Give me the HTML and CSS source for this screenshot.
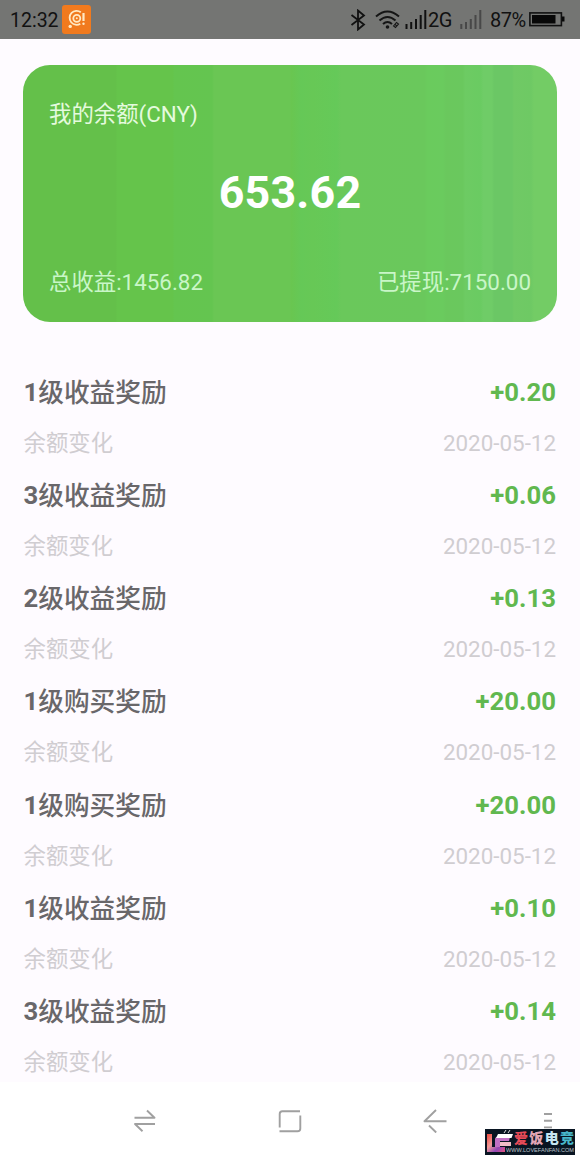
FILE: index.html
```html
<!DOCTYPE html>
<html lang="zh-CN">
<head>
<meta charset="utf-8">
<title>我的余额</title>
<link rel="stylesheet" href="styles.css">
</head>
<body>
<div class="screen">
  <header class="status">
    <span class="clock">12:32</span>
    <svg class="app" width="29" height="29" viewBox="0 0 29 29">
      <rect width="29" height="29" rx="3" fill="#f17a1e"/>
      <g fill="none" stroke="#ffe9c4" stroke-width="1.8">
        <path d="M18.8 7.2A7 7 0 1 0 18.3 18.8"/>
        <circle cx="14.8" cy="13.3" r="3.5"/>
        <path d="M21.5 8v8" stroke-width="2.2"/>
      </g>
      <circle cx="14.8" cy="13.3" r="1" fill="#ffe9c4"/>
      <circle cx="21.5" cy="18.7" r="1.2" fill="#ffe9c4"/>
      <circle cx="8.2" cy="21.4" r="1.7" fill="#ffe9c4"/>
    </svg>
    <svg class="bt" width="16" height="22" viewBox="0 0 16 22" fill="none" stroke="#111" stroke-width="1.8"><path d="M1.500 6L14 15.500 8 20.500V1.500L14 6.500 1.500 16"/></svg>
    <svg class="wifi" width="26" height="20" viewBox="0 0 26 20" fill="none" stroke="#151515" stroke-width="2">
      <path d="M1 6.500Q12.500-3.500 24 6.500M4.500 10.500Q12.500 3.500 20.500 10.500M8 14Q12.500 10 17 14"/>
      <circle cx="12.500" cy="17" r="1.800" fill="#151515" stroke="none"/>
      <path d="M18.500 16l3-3.500 2 1.500-3 3.500zM20 14.500l2 1.500" stroke-width="1.100"/>
    </svg>
    <svg class="sig" width="22" height="20" viewBox="0 0 22 20" stroke="#111" stroke-width="2"><path d="M1.500 14v5M6.200 12v7M11 9v10M15.700 5v14M20.300 0v19"/></svg>
    <span class="net">2G</span>
    <svg class="sig2" width="22" height="20" viewBox="0 0 22 20" stroke="#484848" stroke-width="2"><path d="M1.300 14v5M6 12v7M10.800 9v10M15.500 5v14M20.300 0v19"/></svg>
    <span class="pct">87%</span>
    <svg class="batt" width="36" height="15" viewBox="0 0 36 15"><rect x=".9" y=".9" width="31.500" height="12.700" fill="none" stroke="#111" stroke-width="1.600"/><path d="M3 3h23.500v8.500H3zM33 4.500h2.500v5H33z" fill="#080808"/></svg>
  </header>

  <main class="page">
    <section class="card">
      <div class="label">我的余额(CNY)</div>
      <div class="balance">653.62</div>
      <div class="totals"><span>总收益:1456.82</span><span>已提现:7150.00</span></div>
    </section>
    <ul class="list">
      <li class="item"><div class="row title"><span><b>1</b>级收益奖励</span><b class="amt">+0.20</b></div><div class="row sub"><span>余额变化</span><span>2020-05-12</span></div></li>
      <li class="item"><div class="row title"><span><b>3</b>级收益奖励</span><b class="amt">+0.06</b></div><div class="row sub"><span>余额变化</span><span>2020-05-12</span></div></li>
      <li class="item"><div class="row title"><span><b>2</b>级收益奖励</span><b class="amt">+0.13</b></div><div class="row sub"><span>余额变化</span><span>2020-05-12</span></div></li>
      <li class="item"><div class="row title"><span><b>1</b>级购买奖励</span><b class="amt">+20.00</b></div><div class="row sub"><span>余额变化</span><span>2020-05-12</span></div></li>
      <li class="item"><div class="row title"><span><b>1</b>级购买奖励</span><b class="amt">+20.00</b></div><div class="row sub"><span>余额变化</span><span>2020-05-12</span></div></li>
      <li class="item"><div class="row title"><span><b>1</b>级收益奖励</span><b class="amt">+0.10</b></div><div class="row sub"><span>余额变化</span><span>2020-05-12</span></div></li>
      <li class="item"><div class="row title"><span><b>3</b>级收益奖励</span><b class="amt">+0.14</b></div><div class="row sub"><span>余额变化</span><span>2020-05-12</span></div></li>
    </ul>
  </main>

  <nav class="nav">
    <svg width="24" height="24" viewBox="0 0 24 24"><path d="M1.500 8.800H21.500L14 1.500M22 15H2l7.500 7.300"/></svg>
    <svg width="24" height="24" viewBox="0 0 24 24"><path d="M1.700 18.500V5Q1.700 2.300 4.400 2.300H22M22.300 6.500V19.500Q22.300 22.300 19.500 22.300H1.500"/></svg>
    <svg width="24" height="24" viewBox="0 0 24 24"><path d="M13 1L1.500 12.300H23.500M6 16.500l7.200 7"/></svg>
    <svg class="more" width="8" height="18" viewBox="0 0 8 18"><path d="M0 2h8M0 8.700h8M0 15.400h8"/></svg>
  </nav>

  <div class="mark">
    <svg class="logo" width="27" height="24" viewBox="0 0 27 24">
      <defs><linearGradient id="lf" x1="0" y1="0" x2="1" y2="1"><stop offset="0" stop-color="#ee4a3e"/><stop offset=".4" stop-color="#f29a98"/><stop offset=".7" stop-color="#9148b8"/><stop offset="1" stop-color="#e7527c"/></linearGradient></defs>
      <path d="M0 5h5v13h13v5H0z" fill="url(#lf)"/>
      <path d="M8 10q0-2 3-2h12l-1 4H13v6H8z" fill="#c06fc4"/>
      <path d="M13 13h11v4H13z" fill="#f0bdc6"/>
      <path d="M11 5h15l-1.500 4H9z" fill="#fff"/>
      <path d="M17 4l2-3M21 4l2-3" stroke="#ddd"/>
    </svg>
    <div class="brand">
      <div class="name"><span class="n1">爱</span><span class="n2">饭</span><span class="n3">电</span><span class="n4">竞</span></div>
      <svg class="url" width="70" height="6" viewBox="0 0 70 6"><text x="0" y="4.500" textLength="68" lengthAdjust="spacingAndGlyphs">WWW.LOVEFANFAN.COM</text></svg>
    </div>
  </div>
</div>
</body>
</html>
```
FILE: styles.css
```css
* { box-sizing: border-box; }
body { margin: 0; }
.screen {
  position: relative;
  width: 580px;
  height: 1160px;
  overflow: hidden;
  display: flex;
  flex-direction: column;
  background: #fefbff;
  font-family: Roboto, "Noto Sans CJK SC", sans-serif;
}
.status {
  height: 39px;
  flex: none;
  display: flex;
  align-items: center;
  padding: 0 15px 0 10px;
  background: #747573;
  color: #111;
  font-size: 20px;
  line-height: 39px;
  white-space: nowrap;
}
.clock { width: 52px; font-size: 19.5px; padding-top: 2px; }
.bt { margin-left: 259px; }
.wifi { margin-left: 9px; }
.sig { margin-left: 4px; }
.net { width: 25px; margin-left: 1px; padding-top: 2px; letter-spacing: -.6px; }
.sig2 { margin-left: 7px; }
.pct { width: 37px; margin-left: 8px; padding-top: 2px; letter-spacing: -.5px; }
.batt { margin-left: 2px; }
.status svg { flex: none; }

.page { height: 1043px; flex: none; padding: 25.5px 23px 0; }
.card {
  height: 257.5px;
  border-radius: 27px;
  padding: 32px 26px 0 26px;
  display: flex;
  flex-direction: column;
  color: #e4fade;
  font-size: 22.4px;
  line-height: 34px;
  background: linear-gradient(90deg,
    #64c04a 0, #64c04a 93px, #65c44b 94px, #65c44b 150px,
    #64c54f 151px, #64c550 189px, #6ac654 191px, #6ac654 267px,
    #69c650 268px, #65c857 278px, #67c856 290px, #65c959 314px,
    #6ac85b 318px, #6ac85c 402px, #6acb5d 404px, #6acb5e 420px,
    #6ac85d 423px, #6ac85e 440px, #6dcb63 442px, #6acb62 458px,
    #6fcc67 460px, #6fcc67 469px, #6bc765 471px, #6bc765 489px, #70c965 491px,
    #6ec964 508px, #73cc65 511px, #73cc65 100%);
}
.balance {
  margin-top: 34px;
  height: 56px;
  line-height: 56px;
  font-size: 44.8px;
  font-weight: 700;
  letter-spacing: .2px;
  text-align: center;
  color: #fff;
}
.totals { margin-top: 44px; display: flex; justify-content: space-between; color: #c9f6c8; }

.list { list-style: none; margin: 49px 0 0; padding: 0 1px; }
.item { height: 103.15px; }
.row { display: flex; justify-content: space-between; white-space: nowrap; }
.title { height: 44px; line-height: 44px; font-size: 25.7px; font-weight: 500; color: #69676a; }
.title > span { margin-left: -.5px; }
.title b { font-weight: 700; }
.title span b { position: relative; top: -1px; }
.title .amt { line-height: 42px; color: #61b84f; }
.sub { margin-top: 11px; height: 34px; line-height: 34px; font-size: 22.4px; color: #d0cdd1; }
.sub span:first-child { margin-left: -.5px; }

.nav {
  flex: 1;
  display: flex;
  background: #fff;
  padding: 27px 0 0 133px;
  gap: 121px;
}
.nav svg { flex: none; fill: none; stroke: #a0a0a0; stroke-width: 1.9; stroke-linejoin: round; }
.nav .more { margin: 3px 0 0 -24px; }

.mark {
  position: absolute;
  left: 485px;
  top: 1129px;
  width: 90px;
  height: 26px;
  display: flex;
  padding-left: 2px;
  background: #091522;
}
.logo { flex: none; }
.brand { width: 61px; }
.name { display: flex; justify-content: space-between; padding: 0 1px 0 0; font-size: 14px; line-height: 19px; height: 18px; font-weight: 900; }
.n1 { color: #e64b58; }
.n2 { color: #e3a5b5; }
.n3 { color: #c5e5f1; }
.n4 { color: #48b7ca; }
.url { display: block; margin-left: -8px; font-family: "Liberation Sans", sans-serif; font-size: 4.5px; fill: #bdc4cb; }
```
